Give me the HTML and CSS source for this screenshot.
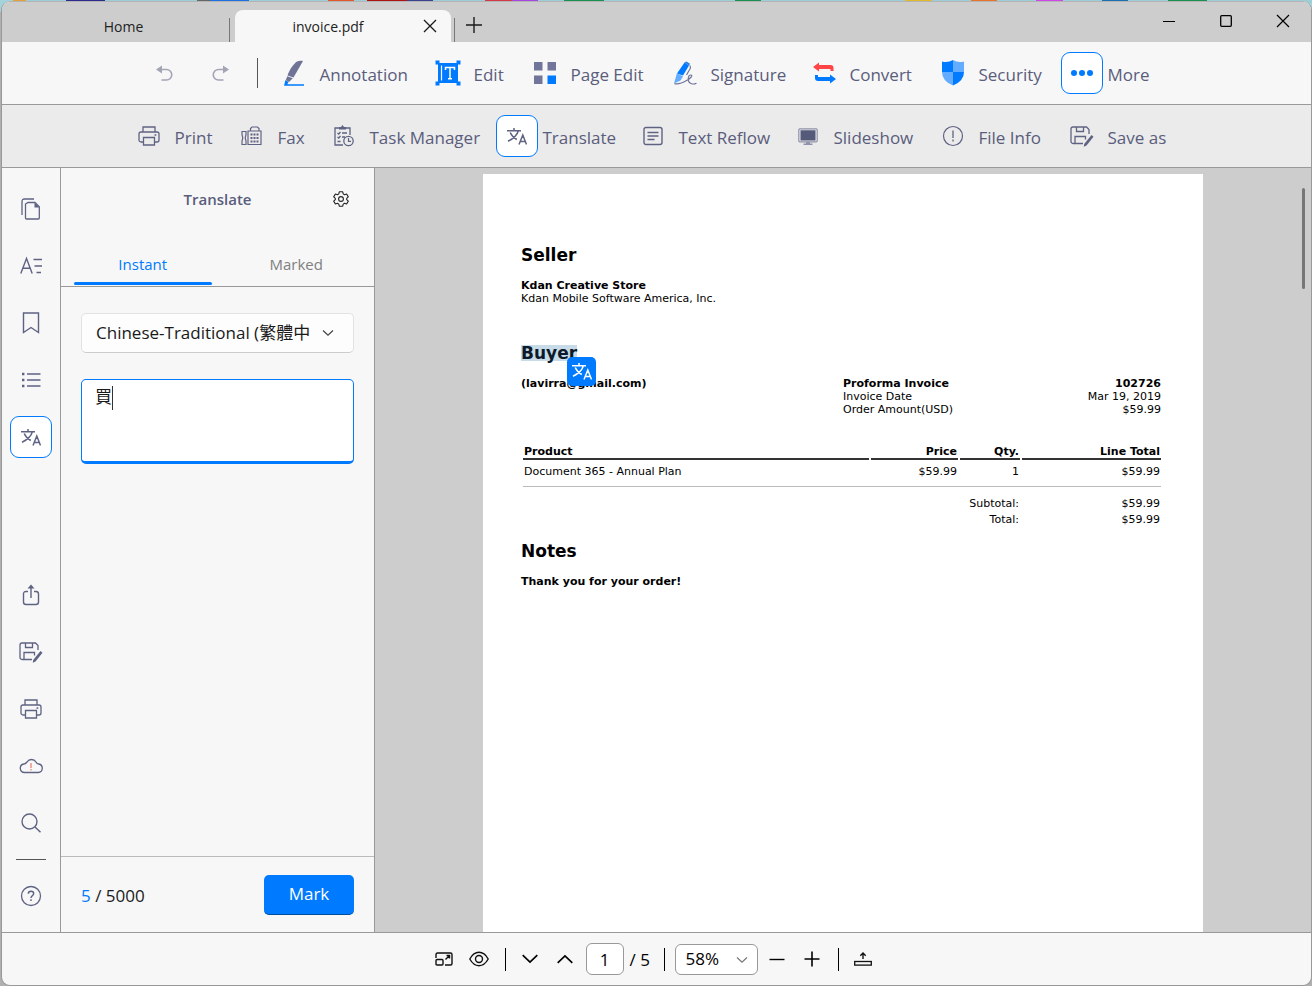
FILE: index.html
```html
<!DOCTYPE html>
<html lang="en">
<head>
<meta charset="utf-8">
<title>invoice.pdf</title>
<link rel="stylesheet" href="styles.css">
</head>
<body>
<svg class="defs" aria-hidden="true">
  <symbol id="translate" viewBox="0 0 20 17"><path d="M7 0v2.8M0 2.8h14M11.4 2.8C10 7.500 6 11 1 13.200M3.200 4.500C4.500 7.500 7 10 9.800 11.500M12 16.500l3.800-9.500 3.700 9.500M13.200 13.500h5.200" fill="none" stroke="currentColor" stroke-width="1.500"/></symbol>
  <symbol id="print" viewBox="0 0 22 20"><path d="M5 6V1h12v5M5 16H3a2 2 0 0 1-2-2V8a2 2 0 0 1 2-2h16a2 2 0 0 1 2 2v6a2 2 0 0 1-2 2h-2M5.500 11.500h11v7.500h-11z" fill="none" stroke="currentColor" stroke-width="1.300"/><path d="M16.500 8.300h1.800v1.500h-1.800z" fill="currentColor"/></symbol>
  <symbol id="saveas" viewBox="0 0 24 21"><path d="M13 17.500H3a2 2 0 0 1-2-2V3a2 2 0 0 1 2-2h13.500L19 3.500V8M6.500 1v4.500h7V1M5 17.500V10.500h10.500v3" fill="none" stroke="currentColor" stroke-width="1.300"/><path d="M21.500 9l2 1.800-7 8.700-2.700 1.200.4-2.700z" fill="currentColor"/></symbol>
  <symbol id="chev" viewBox="0 0 12 8"><path d="M1 1.500l5 4.700 5-4.700" fill="none" stroke="currentColor" stroke-width="1.200"/></symbol>
</svg>
<div class="window">
  <header class="titlebar">
    <button class="tab">Home</button>
    <span class="tab-sep"></span>
    <div class="tab tab-active"><span>invoice.pdf</span>
      <button class="tab-close" aria-label="Close tab"><svg width="14" height="14" viewBox="0 0 14 14"><path d="M1 1l12 12M13 1L1 13" stroke="#1a1a1a" stroke-width="1.300"/></svg></button>
    </div>
    <span class="tab-sep"></span>
    <button class="tab-add" aria-label="New tab"><svg width="16" height="16" viewBox="0 0 16 16"><path d="M8 0v16M0 8h16" stroke="#1a1a1a" stroke-width="1.400"/></svg></button>
    <div class="controls">
      <button aria-label="Minimize"><svg width="12" height="12" viewBox="0 0 12 12"><path d="M0 6.500h12" stroke="#000" stroke-width="1.200"/></svg></button>
      <button aria-label="Maximize"><svg width="12" height="12" viewBox="0 0 12 12"><rect x=".7" y=".7" width="10.600" height="10.600" rx="1" fill="none" stroke="#000" stroke-width="1.300"/></svg></button>
      <button aria-label="Close"><svg width="12" height="12" viewBox="0 0 12 12"><path d="M0 0l12 12M12 0L0 12" stroke="#000" stroke-width="1.200"/></svg></button>
    </div>
  </header>

  <nav class="bar tools">
    <button class="tool" aria-label="Undo"><span class="ico faint"><svg width="17" height="17" viewBox="0 0 17 17"><path d="M4 4.500h6.500a5.200 5.200 0 0 1 0 10.500H5.500" fill="none" stroke="currentColor" stroke-width="1.600"/><path d="M0 4.500L6 .5v8z" fill="currentColor"/></svg></span></button>
    <button class="tool" aria-label="Redo"><span class="ico faint"><svg width="17" height="17" viewBox="0 0 17 17"><path d="M13 4.500H6.500a5.200 5.200 0 0 0 0 10.500h5" fill="none" stroke="currentColor" stroke-width="1.600"/><path d="M17 4.500L11 .5v8z" fill="currentColor"/></svg></span></button>
    <span class="tool-sep"></span>
    <button class="tool"><span class="ico"><svg width="22" height="26" viewBox="0 0 22 26"><path d="M14 1.500C15.500.7 18 .4 20 1L10.500 17.500 4.500 15.500C6.500 9.500 10.500 4 14 1.500z" fill="#6f7396"/><path d="M4.300 16.300l5.500 2L6 22 2.800 20z" fill="#6f7396"/><path d="M2.500 20l3 2-1.200 2.300H21v1.400H1z" fill="#007aff"/></svg></span><span class="label">Annotation</span></button>
    <button class="tool"><span class="ico"><svg width="26" height="26" viewBox="0 0 26 26"><path d="M3 3h20v20H3z" fill="#007aff"/><path d="M.5.500h4v4h-4zM21.500.5h4v4h-4zM.5 21.500h4v4h-4zM21.500 21.500h4v4h-4z" fill="#007aff"/><path d="M6.500 5.500v15" stroke="#fff" stroke-width="1.200"/><path d="M10.500 10V7.500h9V10M15 7.500v11M13 18.700h4" fill="none" stroke="#fff" stroke-width="1.500"/></svg></span><span class="label">Edit</span></button>
    <button class="tool"><span class="ico"><svg width="24" height="24" viewBox="0 0 24 24"><path d="M1 1h8.500v8.500H1zM14.500 1H23v8.500h-8.500zM1 14.500h8.500V23H1z" fill="#71759a"/><path d="M14.500 14.500H23V23h-8.500z" fill="#007aff"/></svg></span><span class="label">Page Edit</span></button>
    <button class="tool"><span class="ico"><svg width="24" height="24" viewBox="0 0 24 24"><path d="M11.500 1.500l4.500 3-6 10L4 12.500z" fill="#007aff"/><path d="M4 12l6 3.500L7.500 19.500l-6.500 3z" fill="#63acff"/><path d="M11.500 1.500L13.500.5 17 2.800 16 4.500z" fill="#2b7fdd"/><path d="M17 4.500l.5 2.500-4 7M1.500 22.700c5 1 8-.7 12-3.200 4-2 7-5.500 4.300-5.500-2.800 0-4.300 7 .7 8.700 1.500.5 3.500.2 5-.5" fill="none" stroke="#71759a" stroke-width="1.200"/></svg></span><span class="label">Signature</span></button>
    <button class="tool"><span class="ico"><svg width="24" height="22" viewBox="0 0 24 22"><path d="M1 5L7 .5V3h11.500q3 0 3 3v3h-3V7H7v2.500z" fill="#ff4545"/><path d="M24 17l-6 4.500V19H6q-3 0-3-3v-3h3v2h12v-2.500z" fill="#007aff"/></svg></span><span class="label">Convert</span></button>
    <button class="tool"><span class="ico"><svg width="22" height="26" viewBox="0 0 22 26"><path d="M11 0Q6 3 0 1.500V12h11z" fill="#007aff"/><path d="M11 0q5 3 11 1.500V12H11z" fill="#63acff"/><path d="M0 12h11v13.500Q0 21 0 12z" fill="#63acff"/><path d="M22 12H11v13.500Q22 21 22 12z" fill="#007aff"/></svg></span><span class="label">Security</span></button>
    <button class="tool"><span class="ico boxed"><svg width="24" height="8" viewBox="0 0 24 8"><g fill="#007aff"><circle cx="4" cy="4" r="3"/><circle cx="12" cy="4" r="3"/><circle cx="20" cy="4" r="3"/></g></svg></span><span class="label">More</span></button>
  </nav>

  <nav class="bar subtools">
    <button class="tool"><span class="ico"><svg width="22" height="20"><use href="#print"/></svg></span><span class="label">Print</span></button>
    <button class="tool"><span class="ico"><svg width="21" height="20" viewBox="0 0 21 20"><path d="M7 5h13v13.500H7zM9.500 5V2.500L11 1h5.500L18 2.500V5M1 5.500h4v3L4.200 12l.8 3v3.500H1V15l.8-3L1 8.500z" fill="none" stroke="currentColor" stroke-width="1.200"/><path d="M9.500 8.500h8M9.500 12h8M9.500 15.500h8" stroke="currentColor" stroke-width="2" stroke-dasharray="2 1"/></svg></span><span class="label">Fax</span></button>
    <button class="tool"><span class="ico"><svg width="20" height="22" viewBox="0 0 20 22"><path d="M9 20H1V3h15v7M3.500 8l1.200 1L6.500 7M8 8h5M3.500 12l1.200 1 1.800-2M8 12h3M3.500 16.500h3" fill="none" stroke="currentColor" stroke-width="1.300"/><path d="M5 2h2l1.500-2L10 2h2v2.500H5z" fill="currentColor"/><circle cx="14.500" cy="16" r="4.700" fill="none" stroke="currentColor" stroke-width="1.300"/><path d="M14.500 13v3.300H17" fill="none" stroke="currentColor" stroke-width="1.200"/></svg></span><span class="label">Task Manager</span></button>
    <button class="tool"><span class="ico boxed"><svg width="20" height="17"><use href="#translate"/></svg></span><span class="label">Translate</span></button>
    <button class="tool"><span class="ico"><svg width="20" height="20" viewBox="0 0 20 20"><rect x="1" y="1.500" width="18" height="17" rx="2" fill="none" stroke="currentColor" stroke-width="1.400"/><path d="M4.500 6.500h11M4.500 10h11M4.500 13.500h7" stroke="currentColor" stroke-width="1.300"/></svg></span><span class="label">Text Reflow</span></button>
    <button class="tool"><span class="ico"><svg width="20" height="17" viewBox="0 0 20 17"><rect x=".8" y=".8" width="18.400" height="13" rx="1" fill="#ebebeb" stroke="#8f92aa" stroke-width="1.200"/><path d="M2.500 2.200h15v10.300h-15z" fill="#565a7a"/><path d="M8 14h4v1.500h2.500V17h-9v-1.500H8z" fill="#8f92aa"/></svg></span><span class="label">Slideshow</span></button>
    <button class="tool"><span class="ico"><svg width="22" height="22" viewBox="0 0 22 22"><circle cx="11" cy="11" r="9.500" fill="none" stroke="currentColor" stroke-width="1.200"/><path d="M11 5.500v7.500M11 14.500v2" stroke="currentColor" stroke-width="1.300"/></svg></span><span class="label">File Info</span></button>
    <button class="tool"><span class="ico"><svg width="24" height="21"><use href="#saveas"/></svg></span><span class="label">Save as</span></button>
  </nav>

  <main class="work">
    <aside class="rail">
      <div class="rail-group">
        <button class="ico" aria-label="Thumbnails"><svg width="20" height="22" viewBox="0 0 20 22"><path d="M1 17V3.500Q1 1 3.500 1H13M7 4.500h7l4.300 4.300V20a1 1 0 0 1-1 1H5.500a1 1 0 0 1-1-1V6z" fill="none" stroke="currentColor" stroke-width="1.300"/><path d="M13.500 4.500l5 5h-5z" fill="currentColor"/></svg></button>
        <button class="ico" aria-label="Annotations"><svg width="22" height="18" viewBox="0 0 22 18"><path d="M.8 16.500L6.500 1.500l5.700 15M3 11.300h7M13.500 2.500H22M14.500 9H22M16.500 15.500H21" fill="none" stroke="currentColor" stroke-width="1.400"/></svg></button>
        <button class="ico" aria-label="Bookmarks"><svg width="18" height="22" viewBox="0 0 18 22"><path d="M1.500 1h15v19.500L9 15.500 1.500 20.500z" fill="none" stroke="currentColor" stroke-width="1.400"/></svg></button>
        <button class="ico" aria-label="Outline"><svg width="20" height="16" viewBox="0 0 20 16"><path d="M6 2h13.500M6 8h13.500M6 14h13.500" stroke="currentColor" stroke-width="1.300"/><path d="M1 2h2.400M1 8h2.400M1 14h2.400" stroke="currentColor" stroke-width="2.400"/></svg></button>
        <button class="ico boxed" aria-label="Translate"><svg width="20" height="17"><use href="#translate"/></svg></button>
      </div>
      <div class="rail-group">
        <button class="ico" aria-label="Share"><svg width="18" height="22" viewBox="0 0 18 22"><path d="M6 7.500H4Q1.500 7.500 1.500 10v8q0 2.500 2.500 2.500h10q2.500 0 2.500-2.500v-8q0-2.500-2.500-2.500h-2M9 14V3" fill="none" stroke="currentColor" stroke-width="1.400"/><path d="M9 .5l3.500 4h-7z" fill="currentColor"/></svg></button>
        <button class="ico" aria-label="Save as"><svg width="24" height="21"><use href="#saveas"/></svg></button>
        <button class="ico" aria-label="Print"><svg width="22" height="20"><use href="#print"/></svg></button>
        <button class="ico" aria-label="Cloud"><svg width="24" height="16" viewBox="0 0 24 16"><path d="M5.500 14.500a4.300 4.300 0 0 1-.8-8.500Q6.500 6 8 4q1.500-2.500 4.500-2.500 3 0 4.500 2.500.8 1.800 2.800 2a4.300 4.300 0 0 1-.5 8.500z" fill="none" stroke="currentColor" stroke-width="1.300"/><path d="M12 5v5M12 11v1.400" stroke="#e8604c" stroke-width="1"/></svg></button>
        <button class="ico" aria-label="Search"><svg width="20" height="20" viewBox="0 0 20 20"><circle cx="8.500" cy="8.500" r="7.500" fill="none" stroke="currentColor" stroke-width="1.400"/><path d="M14 14l5.500 5.300" stroke="currentColor" stroke-width="1.500"/></svg></button>
        <hr class="rail-line">
        <button class="ico" aria-label="Help"><svg width="22" height="22" viewBox="0 0 22 22"><circle cx="11" cy="11" r="9.500" fill="none" stroke="currentColor" stroke-width="1.300"/><path d="M8.300 8.800Q8.300 6.300 11 6.300t2.700 2.300q0 1.300-1.500 2.200-1.200.8-1.200 2.200M11 14.300v1.700" fill="none" stroke="currentColor" stroke-width="1.400"/></svg></button>
      </div>
    </aside>

    <section class="panel">
      <div class="panel-head">
        <h1 class="panel-title">Translate</h1>
        <button class="gear" aria-label="Settings"><svg width="16" height="16" viewBox="0 0 16 16"><path d="M6.300 .8h3.400l.5 2.100 1.300.8 2.100-.7 1.700 2.900-1.600 1.400v1.400l1.600 1.400-1.700 2.900-2.100-.7-1.300.8-.5 2.100H6.300l-.5-2.100-1.300-.8-2.100.7L.7 10.100l1.600-1.400V7.300L.7 5.900 2.400 3l2.100.7 1.300-.8z" fill="none" stroke="#222" stroke-width="1.100" stroke-linejoin="round"/><circle cx="8" cy="8" r="2.400" fill="none" stroke="#222" stroke-width="1.100"/></svg></button>
      </div>
      <div class="panel-tabs">
        <button class="ptab ptab-on">Instant</button>
        <button class="ptab">Marked</button>
      </div>
      <div class="panel-body">
        <div class="lang">
          <select class="lang-select" aria-label="Target language"><option>Chinese-Traditional (繁體中</option></select>
          <svg class="lang-chev" width="12" height="8"><use href="#chev"/></svg>
        </div>
        <div class="result">
          <textarea class="result-text" aria-label="Translation">買</textarea>
          <span class="caret"></span>
        </div>
      </div>
      <div class="panel-foot">
        <span class="count"><span class="count-now">5</span> / 5000</span>
        <button class="mark">Mark</button>
      </div>
    </section>

    <section class="viewer">
      <article class="page">
        <h2 class="h">Seller</h2>
        <p class="line strong">Kdan Creative Store</p>
        <p class="line">Kdan Mobile Software America, Inc.</p>
        <h2 class="h h-buyer"><span class="picked">Buyer<button class="float" aria-label="Translate selection"><svg width="20" height="17"><use href="#translate"/></svg></button></span></h2>
        <div class="parties">
          <p class="line strong">(lavirra@gmail.com)</p>
          <dl class="facts">
            <dt class="strong">Proforma Invoice</dt><dd class="strong">102726</dd>
            <dt>Invoice Date</dt><dd>Mar 19, 2019</dd>
            <dt>Order Amount(USD)</dt><dd>$59.99</dd>
          </dl>
        </div>
        <table class="items">
          <colgroup><col><col class="c-price"><col class="c-qty"><col class="c-total"></colgroup>
          <thead><tr><th class="left">Product</th><th>Price</th><th>Qty.</th><th>Line Total</th></tr></thead>
          <tbody>
            <tr class="item"><td class="left">Document 365 - Annual Plan</td><td>$59.99</td><td>1</td><td>$59.99</td></tr>
            <tr><td class="rule" colspan="4"></td></tr>
            <tr class="sum"><td colspan="3">Subtotal:</td><td>$59.99</td></tr>
            <tr class="sum"><td colspan="3">Total:</td><td>$59.99</td></tr>
          </tbody>
        </table>
        <h2 class="h h-notes">Notes</h2>
        <p class="line strong">Thank you for your order!</p>
      </article>
      <div class="scroll"></div>
    </section>
  </main>

  <footer class="status">
    <button class="sbtn" aria-label="Fit"><svg width="18" height="14" viewBox="0 0 18 14"><path d="M1 6V2.500Q1 1 2.500 1h13Q17 1 17 2.500v9q0 1.500-1.500 1.500H10M1 8.500Q1 7.500 2 7.500h5q1 0 1 1V12q0 1-1 1H2q-1 0-1-1zM10.500 7.500l4-4M11.500 3.500h3v3" fill="none" stroke="#111" stroke-width="1.400"/></svg></button>
    <button class="sbtn" aria-label="View"><svg width="20" height="16" viewBox="0 0 20 16"><path d="M.8 8Q4.500 1.300 10 1.300T19.200 8Q15.500 14.700 10 14.700T.8 8z" fill="none" stroke="#111" stroke-width="1.400"/><circle cx="10" cy="8" r="3.500" fill="none" stroke="#111" stroke-width="1.400"/></svg></button>
    <span class="ssep"></span>
    <button class="sbtn" aria-label="Next page"><svg width="16" height="10" viewBox="0 0 16 10"><path d="M.7 1.200L8 8l7.300-6.800" fill="none" stroke="#000" stroke-width="1.700"/></svg></button>
    <button class="sbtn" aria-label="Previous page"><svg width="16" height="10" viewBox="0 0 16 10"><path d="M.7 8.800L8 2l7.300 6.800" fill="none" stroke="#000" stroke-width="1.700"/></svg></button>
    <input class="page-no" type="text" value="1" aria-label="Page">
    <span class="page-of">/ 5</span>
    <span class="ssep"></span>
    <div class="zoom"><select class="zoom-select" aria-label="Zoom"><option>58%</option></select><svg class="zoom-chev" width="12" height="8"><use href="#chev"/></svg></div>
    <button class="sbtn" aria-label="Zoom out"><svg width="16" height="16" viewBox="0 0 16 16"><path d="M.5 8.500h15" stroke="#000" stroke-width="1.400"/></svg></button>
    <button class="sbtn" aria-label="Zoom in"><svg width="16" height="16" viewBox="0 0 16 16"><path d="M.5 8h15M8 .5v15" stroke="#000" stroke-width="1.600"/></svg></button>
    <span class="ssep"></span>
    <button class="sbtn" aria-label="Collapse"><svg width="18" height="14" viewBox="0 0 18 14"><rect x=".7" y="9.500" width="16.600" height="3.600" fill="none" stroke="#111" stroke-width="1.300"/><path d="M9 7V1.500M6.300 3.800L9 1l2.700 2.800" fill="none" stroke="#111" stroke-width="1.400"/></svg></button>
  </footer>
</div>
</body>
</html>
```
FILE: styles.css
```css
* { box-sizing: border-box; }
body {
  margin: 0;
  height: 100vh;
  padding: 1px 0 0 1px;
  background:
    linear-gradient(90deg, transparent 1%, #e4a13a 1% 2%, #9dcdd6 2% 5%, #2e2b8c 5% 8%, #9dcdd6 8% 15%, #666 15% 16%, #1e6fe0 16% 19%, #9dcdd6 19% 25%, #e2572b 25% 27%, #9dcdd6 27% 28%, #b01212 28% 31%, #3b4191 31% 33%, #9dcdd6 33% 37%, #d33a46 37% 39%, #a646e0 39% 41%, #9dcdd6 41% 43%, #1a8f50 43% 46%, #9dcdd6 46% 56%, #1a8f50 56% 58%, #9dcdd6 58% 69%, #e2b92b 69% 71%, #9dcdd6 71% 74%, #e8742b 74% 76%, #9dcdd6 76% 79%, #d146e8 79% 81%, #9dcdd6 81% 84%, #1c6fb0 84% 86%, #9dcdd6 86% 89%, #1a8f50 89% 92%, #9dcdd6 92%) 0 0 / 100% 3px no-repeat,
    linear-gradient(#a3d3db 12px, #b0b0b0 12px);
  font-family: "Open Sans", "Noto Sans CJK TC", sans-serif;
  font-size: 17px;
  line-height: 24px;
  color: #1a1a1a;
}
button, select, input, textarea { font: inherit; color: inherit; margin: 0; }
button { background: none; border: 0; padding: 0; }
svg { display: block; flex: none; overflow: visible; }
p, h1, h2, dl, dd { margin: 0; }
.defs { position: absolute; width: 0; height: 0; }

.window {
  height: 100%;
  display: flex;
  flex-direction: column;
  border: 1px solid #999;
  border-top-color: #b4b4b4;
  border-radius: 9px;
  overflow: hidden;
  background: #f7f7f7;
}

.titlebar { display: flex; align-items: flex-end; height: 40px; background: #cdcdcd; flex: none; }
.tab { width: 227px; height: 32px; padding: 2px 0 0 16px; font-size: 14px; color: #222; text-align: center; }
.tab-sep { width: 1px; height: 24px; margin-right: 5px; background: #777; }
.tab-active {
  position: relative;
  width: 216px;
  padding: 0 30px 0 0;
  margin-right: 3px;
  line-height: 34px;
  border-radius: 8px 8px 0 0;
  background: #f7f7f7;
}
.tab-close { position: absolute; right: 14px; top: 9px; }
.tab-add { height: 34px; width: 28px; display: grid; place-items: center; }
.controls { display: flex; align-self: flex-start; margin-left: auto; height: 38px; }
.controls button { width: 57px; display: grid; place-items: center; }

.bar { display: grid; justify-content: center; align-items: center; flex: none; height: 63px; padding-right: 21px; border-bottom: 1px solid #999; color: #5a5d7c; }
.tools { grid-template-columns: 56px 57px 16px 154px 97px 140px 139px 129px 129px 88px; }
.subtools { grid-template-columns: 103px 92px 173px 136px 155px 145px 129px 104px; background: #ebebeb; }
.tool { display: flex; align-items: center; gap: 5px; white-space: nowrap; text-align: left; }
.label { padding-top: 3px; }
.tool-sep { width: 1px; height: 30px; background: #555; }
.ico { width: 42px; height: 42px; flex: none; display: grid; place-items: center; color: #5f6383; }
.boxed { background: #fff; border: 1px solid #007aff; border-radius: 9px; }
.faint { color: #a3a5b5; }

.work { flex: 1; min-height: 0; display: flex; }
.rail { width: 59px; flex: none; display: flex; flex-direction: column; justify-content: space-between; align-items: center; padding: 20px 0 15px; border-right: 1px solid #999; }
.rail-group { display: flex; flex-direction: column; align-items: center; gap: 15px; }
.rail-line { width: 30px; height: 1px; margin: 0; border: 0; background: #555; }

.panel { width: 314px; flex: none; display: flex; flex-direction: column; border-right: 1px solid #999; }
.panel-head { display: grid; grid-template-columns: 1fr auto 1fr; align-items: center; height: 62px; padding: 0 25px; }
.panel-title { grid-column: 2; font-size: 15px; line-height: 24px; font-weight: 600; color: #5a5d7c; }
.gear { justify-self: end; }
.panel-tabs { display: grid; grid-template-columns: 1fr 1fr; gap: 16px; height: 57px; padding: 13px 9px 1px 13px; border-bottom: 1px solid #999; }
.ptab { position: relative; font-size: 15px; color: #808080; padding-bottom: 1px; }
.ptab-on { color: #007aff; }
.ptab-on::after { content: ""; position: absolute; left: 0; right: 0; bottom: 0; height: 3px; border-radius: 2px; background: #007aff; }
.panel-body { flex: 1; padding: 26px 20px; }
.lang, .result, .zoom { position: relative; }
.lang { margin-bottom: 26px; }
.lang-select { appearance: none; display: block; width: 100%; height: 40px; padding: 0 40px 0 14px; border: 1px solid #e2e2e2; border-bottom-color: #ccc; border-radius: 5px; background: #fdfdfd; }
.lang-chev { position: absolute; right: 20px; top: 16px; color: #444; pointer-events: none; }
.result-text { display: block; width: 100%; height: 85px; padding: 5px 13px; resize: none; outline: 0; border: 1px solid #007aff; border-bottom-width: 3px; border-radius: 5px; background: #fff; }
.caret { position: absolute; left: 31px; top: 7px; width: 1px; height: 24px; background: #333; }
.panel-foot { display: flex; justify-content: space-between; align-items: center; height: 76px; padding: 0 20px; border-top: 1px solid #bbb; }
.count { padding-top: 3px; }
.count-now { color: #007aff; }
.mark { width: 90px; height: 40px; border-radius: 5px; border-bottom: 1px solid #004f9e; background: #007aff; color: #fff; }

.viewer { position: relative; flex: 1; min-width: 0; overflow: hidden; display: flex; justify-content: center; padding-top: 6px; background: #cdcdcd; }
.page { width: 720px; height: 1018px; flex: none; padding: 70px 38px; background: #fff; color: #000; font: 11px/13px "DejaVu Sans", sans-serif; }
.h { margin-bottom: 13px; font-size: 17px; line-height: 22px; font-weight: 700; }
.h-buyer { margin-top: 37px; }
.h-notes { margin-top: 13px; }
.strong { font-weight: 700; }
.picked { position: relative; display: inline-block; height: 16px; line-height: 16px; background: #c8dbe8; color: #0c1a2b; }
.float { position: absolute; left: 46px; top: 12px; width: 29px; height: 29px; display: grid; place-items: center; border-radius: 5px; background: #007aff; color: #fff; }
.parties { display: flex; justify-content: space-between; padding-right: 4px; }
.facts { width: 318px; display: grid; grid-template-columns: 1fr auto; }
.facts dd { text-align: right; }
.items { width: 642px; margin-top: 25px; table-layout: fixed; border-spacing: 2px 0; text-align: right; }
.c-price { width: 87px; }
.c-qty { width: 60px; }
.c-total { width: 139px; }
.items th { height: 19px; padding: 3px 1px 0; border-bottom: 2px solid #333; font-weight: 700; text-align: right; }
.items td { padding: 0 1px; }
.items .left { text-align: left; }
.item td { height: 22px; }
.items .rule { height: 13px; padding: 0; background: linear-gradient(#bbb, #bbb) 0 4px / 100% 1px no-repeat; }
.sum td { height: 16px; }
.scroll { position: absolute; right: 6px; top: 20px; width: 3px; height: 101px; border-radius: 2px; background: #777; }

.status { display: flex; justify-content: center; align-items: center; height: 53px; flex: none; padding-right: 6px; border-top: 1px solid #999; color: #000; }
.sbtn { width: 35px; height: 32px; display: grid; place-items: center; }
.ssep { width: 1px; height: 23px; margin: 0 7px 0 8px; background: #000; }
.page-no { width: 38px; height: 32px; margin: 0 6px 0 3px; padding: 0; text-align: center; border: 1px solid #999; border-radius: 6px; background: #fff; }
.page-of { width: 26px; padding-top: 2px; }
.zoom { margin: 0 2px 0 3px; }
.zoom-select { appearance: none; display: block; width: 83px; height: 31px; padding: 0 10px; border: 1px solid #999; border-radius: 6px; background: #fff; }
.zoom-chev { position: absolute; right: 10px; top: 12px; color: #777; pointer-events: none; }
```
